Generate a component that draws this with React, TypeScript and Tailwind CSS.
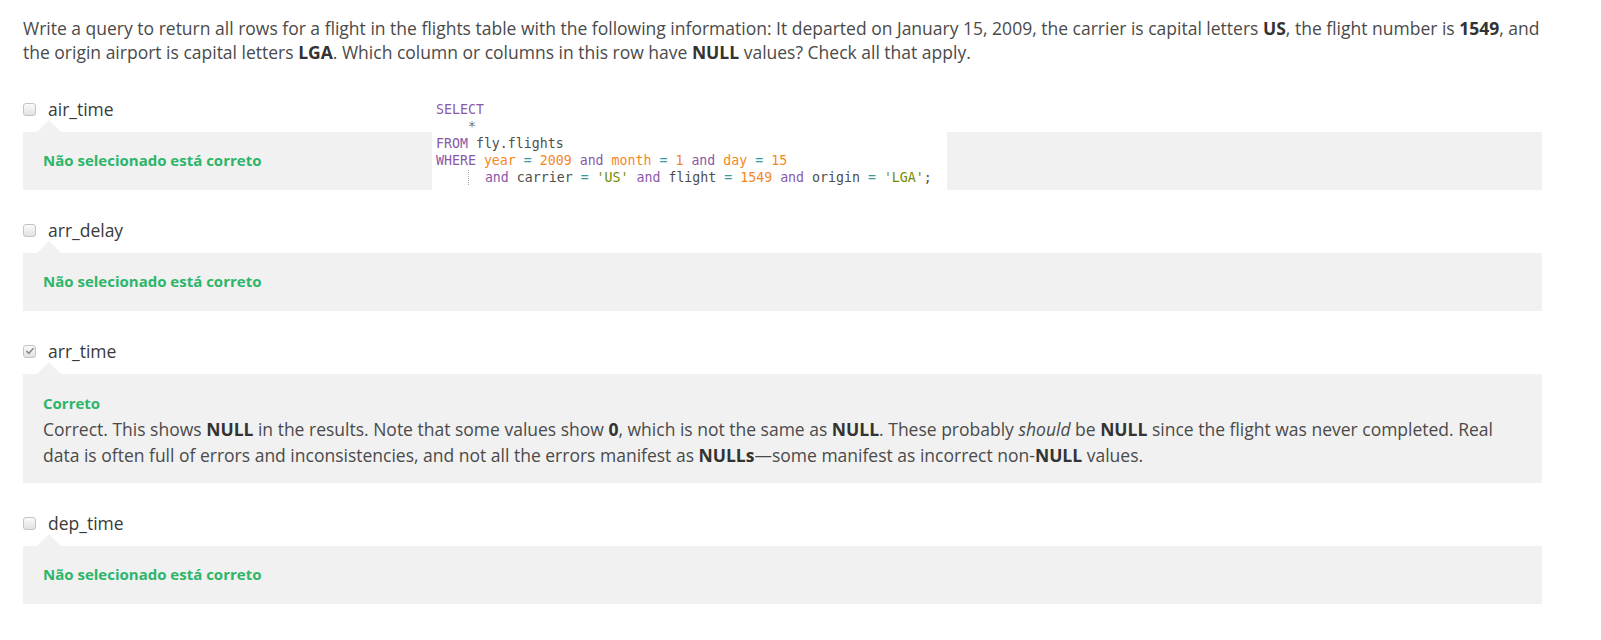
import React from "react";

const KW = ({ children }: { children: React.ReactNode }) => <span className="text-[#8959a8]">{children}</span>;
const OR = ({ children }: { children: React.ReactNode }) => <span className="text-[#f5871f]">{children}</span>;
const OP = ({ children }: { children: React.ReactNode }) => <span className="text-[#3e999f]">{children}</span>;
const STR = ({ children }: { children: React.ReactNode }) => <span className="text-[#718c00]">{children}</span>;

function Checkbox({ checked }: { checked?: boolean }) {
  return (
    <span className="relative inline-flex h-[13px] w-[13px] shrink-0 items-center justify-center rounded-[3px] border border-[#c4c4c4] bg-gradient-to-b from-[#fbfbfb] to-[#e2e2e2]">
      {checked && (
        <svg viewBox="0 0 12 12" className="h-[10px] w-[10px]">
          <path d="M2.2 6.4 L4.8 8.8 L9.8 3" fill="none" stroke="#8a8a8a" strokeWidth="1.8" strokeLinecap="round" strokeLinejoin="round" />
        </svg>
      )}
    </span>
  );
}

function Item({
  label,
  checked,
  children,
  code,
  first,
}: {
  label: string;
  checked?: boolean;
  children: React.ReactNode;
  code?: React.ReactNode;
  first?: boolean;
}) {
  return (
    <div className={`relative ${first ? "mt-[33px]" : "mt-[28px]"}`}>
      <label className="flex h-6 items-center">
        <Checkbox checked={checked} />
        <span className="ml-[12px] text-[17.5px] leading-6 text-[#3a3a3a]">{label}</span>
      </label>
      <div className="relative mt-[11px] bg-[#f1f1f1] px-[20px]">
        <span className="absolute left-[14px] top-[-12px] h-0 w-0 border-b-[12px] border-l-[12px] border-r-[12px] border-b-[#f1f1f1] border-l-transparent border-r-transparent" />
        {children}
      </div>
      {code}
    </div>
  );
}

const Green = ({ children }: { children: React.ReactNode }) => (
  <div className="text-[15px] font-bold leading-5 text-[#2db56a]">{children}</div>
);

export default function App() {
  return (
    <div className="min-h-[640px] bg-white pl-[23px] pr-[59px] font-['Open_Sans',sans-serif]">
      <p className="pt-4 text-[17.5px] leading-6 text-[#4a4a4a]">
        Write a query to return all rows for a flight in the flights table with the following information: It departed on January 15, 2009, the carrier is capital letters <b className="text-[#333]">US</b>, the flight number is <b className="text-[#333]">1549</b>, and the origin airport is capital letters <b className="text-[#333]">LGA</b>. Which column or columns in this row have <b className="text-[#333]">NULL</b> values? Check all that apply.
      </p>

      <Item
        first
        label="air_time"
        code={
          <div className="absolute bottom-0 left-[409px] top-[1px] w-[515px] bg-white pl-[4px] pt-[3px] font-['DejaVu_Sans_Mono',monospace] text-[13.25px] leading-[17px] whitespace-pre text-[#4d4d4c]">
            <div><KW>SELECT</KW></div>
            <div>{"    "}<span className="text-[#777]">*</span></div>
            <div><KW>FROM</KW> fly.flights</div>
            <div>
              <KW>WHERE</KW> <OR>year</OR> <OP>=</OP> <OR>2009</OR> <KW>and</KW> <OR>month</OR> <OP>=</OP> <OR>1</OR> <KW>and</KW> <OR>day</OR> <OP>=</OP> <OR>15</OR>
            </div>
            <div>
              {"    "}
              <span className="border-l border-dotted border-[#aaa]">{"  "}</span>
              <KW>and</KW> carrier <OP>=</OP> <STR>'US'</STR> <KW>and</KW> flight <OP>=</OP> <OR>1549</OR> <KW>and</KW> origin <OP>=</OP> <STR>'LGA'</STR>;
            </div>
          </div>
        }
      >
        <div className="pb-[20px] pt-[18px]">
          <Green>Não selecionado está correto</Green>
        </div>
      </Item>

      <Item label="arr_delay">
        <div className="pb-[20px] pt-[18px]">
          <Green>Não selecionado está correto</Green>
        </div>
      </Item>

      <Item label="arr_time" checked>
        <div className="pb-[15px] pt-[19px]">
          <Green>Correto</Green>
          <p className="mt-[3px] text-[17.5px] leading-[26px] text-[#4a4a4a]">
            Correct. This shows <b className="text-[#333]">NULL</b> in the results. Note that some values show <b className="text-[#333]">0</b>, which is not the same as <b className="text-[#333]">NULL</b>. These probably <i>should</i> be <b className="text-[#333]">NULL</b> since the flight was never completed. Real data is often full of errors and inconsistencies, and not all the errors manifest as <b className="text-[#333]">NULLs</b>—some manifest as incorrect non-<b className="text-[#333]">NULL</b> values.
          </p>
        </div>
      </Item>

      <Item label="dep_time">
        <div className="pb-[20px] pt-[18px]">
          <Green>Não selecionado está correto</Green>
        </div>
      </Item>
    </div>
  );
}
